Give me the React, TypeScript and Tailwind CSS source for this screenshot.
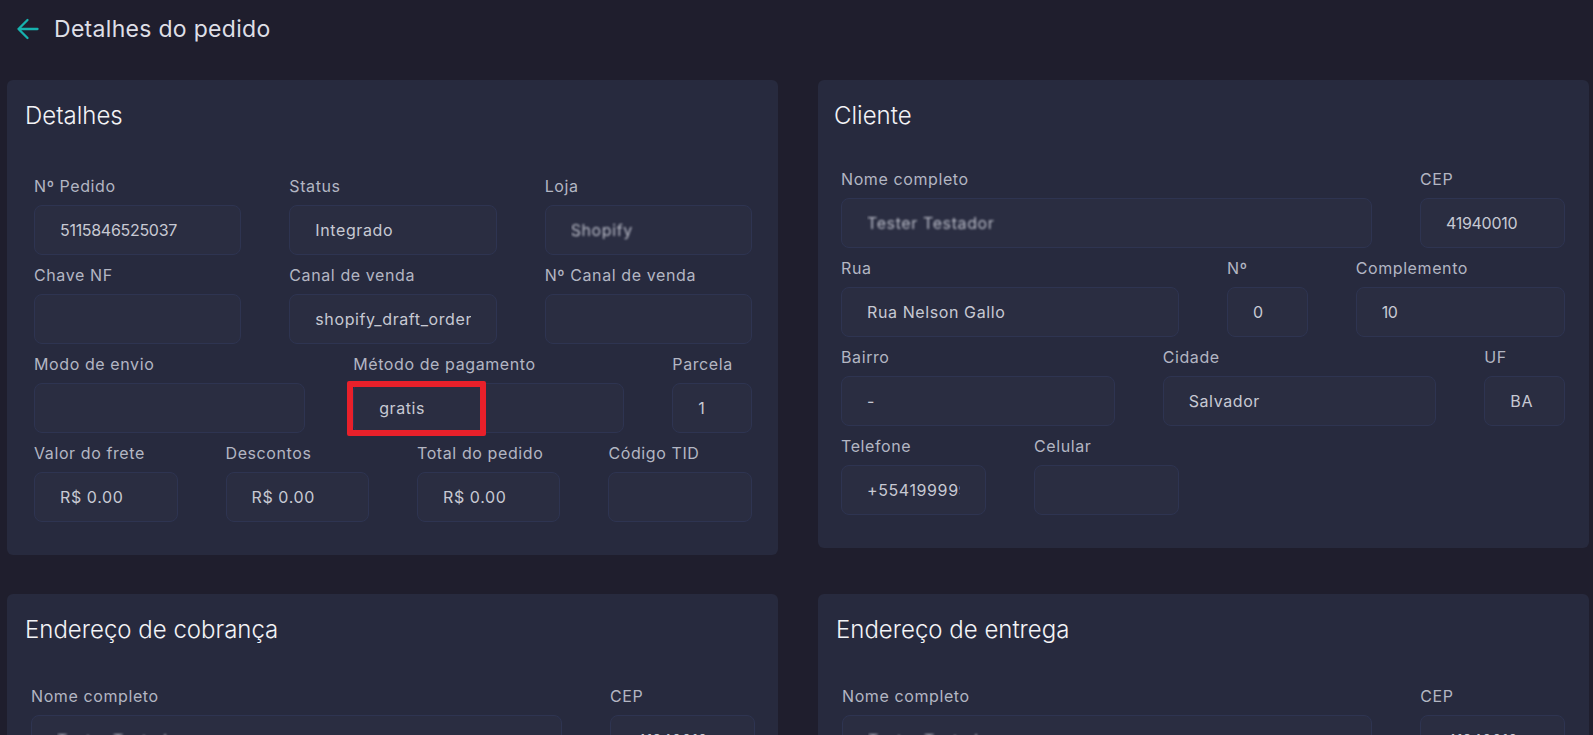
import React from "react";

type FieldProps = {
  label: string;
  value?: string;
  span: string;
  blur?: boolean;
  children?: React.ReactNode;
};

// digits only values look tighter in the original font
const isNumeric = (v?: string) => !!v && /^[0-9]+$/.test(v);

const Field: React.FC<FieldProps> = ({ label, value, span, blur, children }) => {
  return (
    <div className={`${span} mb-[8px]`}>
      <label className="block text-[16px] leading-[24px] tracking-[0.6px] text-[#b3b6c3] whitespace-nowrap">{label}</label>
      <div className="relative mt-[7px]">
        <div className="flex h-[50px] w-full items-center rounded-[8px] border border-[#2e3451] bg-[#2a2d41] px-[25px] text-[16px] text-[#c7c9d3]">
          <div className={`w-full overflow-hidden whitespace-nowrap ${isNumeric(value) ? "tracking-[-0.3px]" : "tracking-[0.6px]"}`}>
            <span className={blur ? "inline-block blur-[1.3px] text-[#b8bac6]" : ""}>{value}</span>
          </div>
        </div>
        {children}
      </div>
    </div>
  );
};

const Card: React.FC<{ title: string; titleClass?: string; formClass: string; children: React.ReactNode }> = ({
  title,
  titleClass = "pl-[18px]",
  formClass,
  children,
}) => {
  return (
    <section className="rounded-[6px] bg-[#272a3e] pt-[19px] pb-[25px]">
      <h2 className={`${titleClass} text-[24px] leading-[33px] font-light text-[#f3f3f6]`}>{title}</h2>
      <div className={`grid grid-cols-12 gap-x-12 ${formClass}`}>{children}</div>
    </section>
  );
};

export default function App() {
  return (
    <div className="min-h-screen bg-[#1f1e2d] font-['Inter',sans-serif]">
      <header className="flex h-[58px] items-center pl-[16px]">
        <svg width="23" height="22" viewBox="0 0 23 22" fill="none" className="mr-[15px]">
          <path d="M21.5 11H2.5M11.5 2L2.5 11L11.5 20" stroke="#17b2ae" strokeWidth="2.3" strokeLinecap="round" strokeLinejoin="round" />
        </svg>
        <h1 className="text-[23px] leading-[30px] tracking-[0.3px] text-[#dedfe6]">Detalhes do pedido</h1>
      </header>

      <main className="mt-[22px] grid grid-cols-2 items-start gap-x-[40px] gap-y-[39px] pl-[7px] pr-[4px] pb-10">
        <Card title="Detalhes" formClass="mt-[42px] px-[27px] pr-[26px]">
          <Field span="col-span-4" label="Nº Pedido" value="5115846525037" />
          <Field span="col-span-4" label="Status" value="Integrado" />
          <Field span="col-span-4" label="Loja" value="Shopify" blur />
          <Field span="col-span-4" label="Chave NF" value="" />
          <Field span="col-span-4" label="Canal de venda" value="shopify_draft_order" />
          <Field span="col-span-4" label="Nº Canal de venda" value="" />
          <Field span="col-span-5" label="Modo de envio" value="" />
          <Field span="col-span-5" label="Método de pagamento" value="gratis">
            <div className="pointer-events-none absolute left-[-6px] top-[-2px] h-[55px] w-[139px] rounded-[2px] border-[6px] border-[#e8202a]" />
          </Field>
          <Field span="col-span-2" label="Parcela" value="1" />
          <Field span="col-span-3" label="Valor do frete" value="R$ 0.00" />
          <Field span="col-span-3" label="Descontos" value="R$ 0.00" />
          <Field span="col-span-3" label="Total do pedido" value="R$ 0.00" />
          <Field span="col-span-3" label="Código TID" value="" />
        </Card>

        <Card title="Cliente" titleClass="pl-[16px]" formClass="mt-[35px] pl-[23px] pr-[24px]">
          <Field span="col-span-9" label="Nome completo" value="Tester Testador" blur />
          <Field span="col-span-3" label="CEP" value="41940010" />
          <Field span="col-span-6" label="Rua" value="Rua Nelson Gallo" />
          <Field span="col-span-2" label="Nº" value="0" />
          <Field span="col-span-4" label="Complemento" value="10" />
          <Field span="col-span-5" label="Bairro" value="-" />
          <Field span="col-span-5" label="Cidade" value="Salvador" />
          <Field span="col-span-2" label="UF" value="BA" />
          <Field span="col-span-3" label="Telefone" value="+5541999999999" />
          <Field span="col-span-3" label="Celular" value="" />
        </Card>

        <Card title="Endereço de cobrança" formClass="mt-[38px] pl-[24px] pr-[23px]">
          <Field span="col-span-9" label="Nome completo" value="Tester Testador" blur />
          <Field span="col-span-3" label="CEP" value="41940010" />
          <Field span="col-span-6" label="Rua" value="Rua Nelson Gallo" />
          <Field span="col-span-2" label="Nº" value="0" />
          <Field span="col-span-4" label="Complemento" value="10" />
          <Field span="col-span-5" label="Bairro" value="-" />
          <Field span="col-span-5" label="Cidade" value="Salvador" />
          <Field span="col-span-2" label="UF" value="BA" />
        </Card>

        <Card title="Endereço de entrega" formClass="mt-[38px] pl-[24px] pr-[24px]">
          <Field span="col-span-9" label="Nome completo" value="Tester Testador" blur />
          <Field span="col-span-3" label="CEP" value="41940010" />
          <Field span="col-span-6" label="Rua" value="Rua Nelson Gallo" />
          <Field span="col-span-2" label="Nº" value="0" />
          <Field span="col-span-4" label="Complemento" value="10" />
          <Field span="col-span-5" label="Bairro" value="-" />
          <Field span="col-span-5" label="Cidade" value="Salvador" />
          <Field span="col-span-2" label="UF" value="BA" />
        </Card>
      </main>
    </div>
  );
}
